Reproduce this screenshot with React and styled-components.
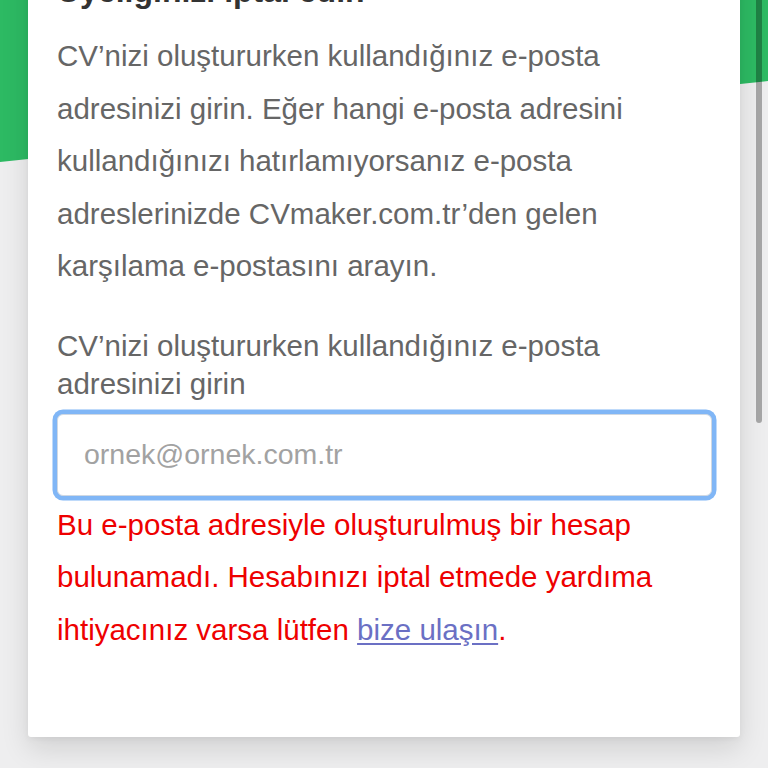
import styled, { createGlobalStyle } from "styled-components";

const GlobalStyle = createGlobalStyle`
  * {
    box-sizing: border-box;
  }

  html,
  body {
    margin: 0;
    padding: 0;
    background: #eeeeef;
    font-family: "Liberation Sans", Arial, Helvetica, sans-serif;
    overflow: hidden;
  }
`;

const Page = styled.div`
  position: relative;
  min-height: 768px;
  padding: 0 28px;
  overflow: hidden;

  &::before {
    content: "";
    position: absolute;
    top: 0;
    left: 0;
    right: 0;
    height: 170px;
    background: #2dba63;
    clip-path: polygon(0 0, 100% 0, 100% 81px, 0 162px);
  }
`;

const Card = styled.section`
  position: relative;
  margin-top: -57px;
  padding: 29px 28px 81px 29px;
  background: #ffffff;
  border-radius: 3px;
  box-shadow: 0 12px 28px rgba(0, 0, 0, 0.12), 0 2px 6px rgba(0, 0, 0, 0.05);
`;

const Title = styled.h1`
  margin: 0 0 20px;
  font-size: 32px;
  line-height: 1.2;
  font-weight: 700;
  color: #333333;
`;

const Intro = styled.p`
  margin: 0 0 34px;
  font-size: 29.5px;
  line-height: 52.5px;
  color: #666666;
`;

const Field = styled.div`
  display: flex;
  flex-direction: column;
`;

const Label = styled.label`
  font-size: 29.5px;
  line-height: 38px;
  color: #666666;
  margin-bottom: 11px;
`;

const EmailInput = styled.input`
  width: 100%;
  height: 82px;
  padding: 0 26px;
  border: 1px solid #cfd8e3;
  border-radius: 6px;
  background: #ffffff;
  box-shadow: 0 0 0 4.5px #80b6f6;
  font-family: inherit;
  font-size: 28.5px;
  color: #333333;
  outline: none;

  &::placeholder {
    color: #a2a2a2;
  }
`;

const ErrorText = styled.p`
  margin: 3px 0 0;
  font-size: 29.5px;
  line-height: 52.5px;
  color: #ee0000;
`;

const ContactLink = styled.a`
  color: #6b70c4;
  text-decoration: underline;
  text-underline-offset: 3px;
`;

const ScrollThumb = styled.div`
  position: fixed;
  top: -10px;
  right: 6px;
  width: 6px;
  height: 433px;
  border-radius: 3px;
  background: rgba(0, 0, 0, 0.3);
`;

export default function App() {
  return (
    <>
      <GlobalStyle />
      <Page>
        <Card>
          <Title>Üyeliğinizi iptal edin</Title>
          <Intro>
            CV’nizi oluştururken kullandığınız e-posta adresinizi girin. Eğer
            hangi e-posta adresini kullandığınızı hatırlamıyorsanız e-posta
            adreslerinizde CVmaker.com.tr’den gelen karşılama e-postasını
            arayın.
          </Intro>
          <Field>
            <Label htmlFor="email">
              CV’nizi oluştururken kullandığınız e-posta adresinizi girin
            </Label>
            <EmailInput id="email" type="email" placeholder="ornek@ornek.com.tr" />
            <ErrorText>
              Bu e-posta adresiyle oluşturulmuş bir hesap bulunamadı. Hesabınızı
              iptal etmede yardıma ihtiyacınız varsa lütfen{" "}
              <ContactLink href="#">bize ulaşın</ContactLink>.
            </ErrorText>
          </Field>
        </Card>
      </Page>
      <ScrollThumb />
    </>
  );
}
